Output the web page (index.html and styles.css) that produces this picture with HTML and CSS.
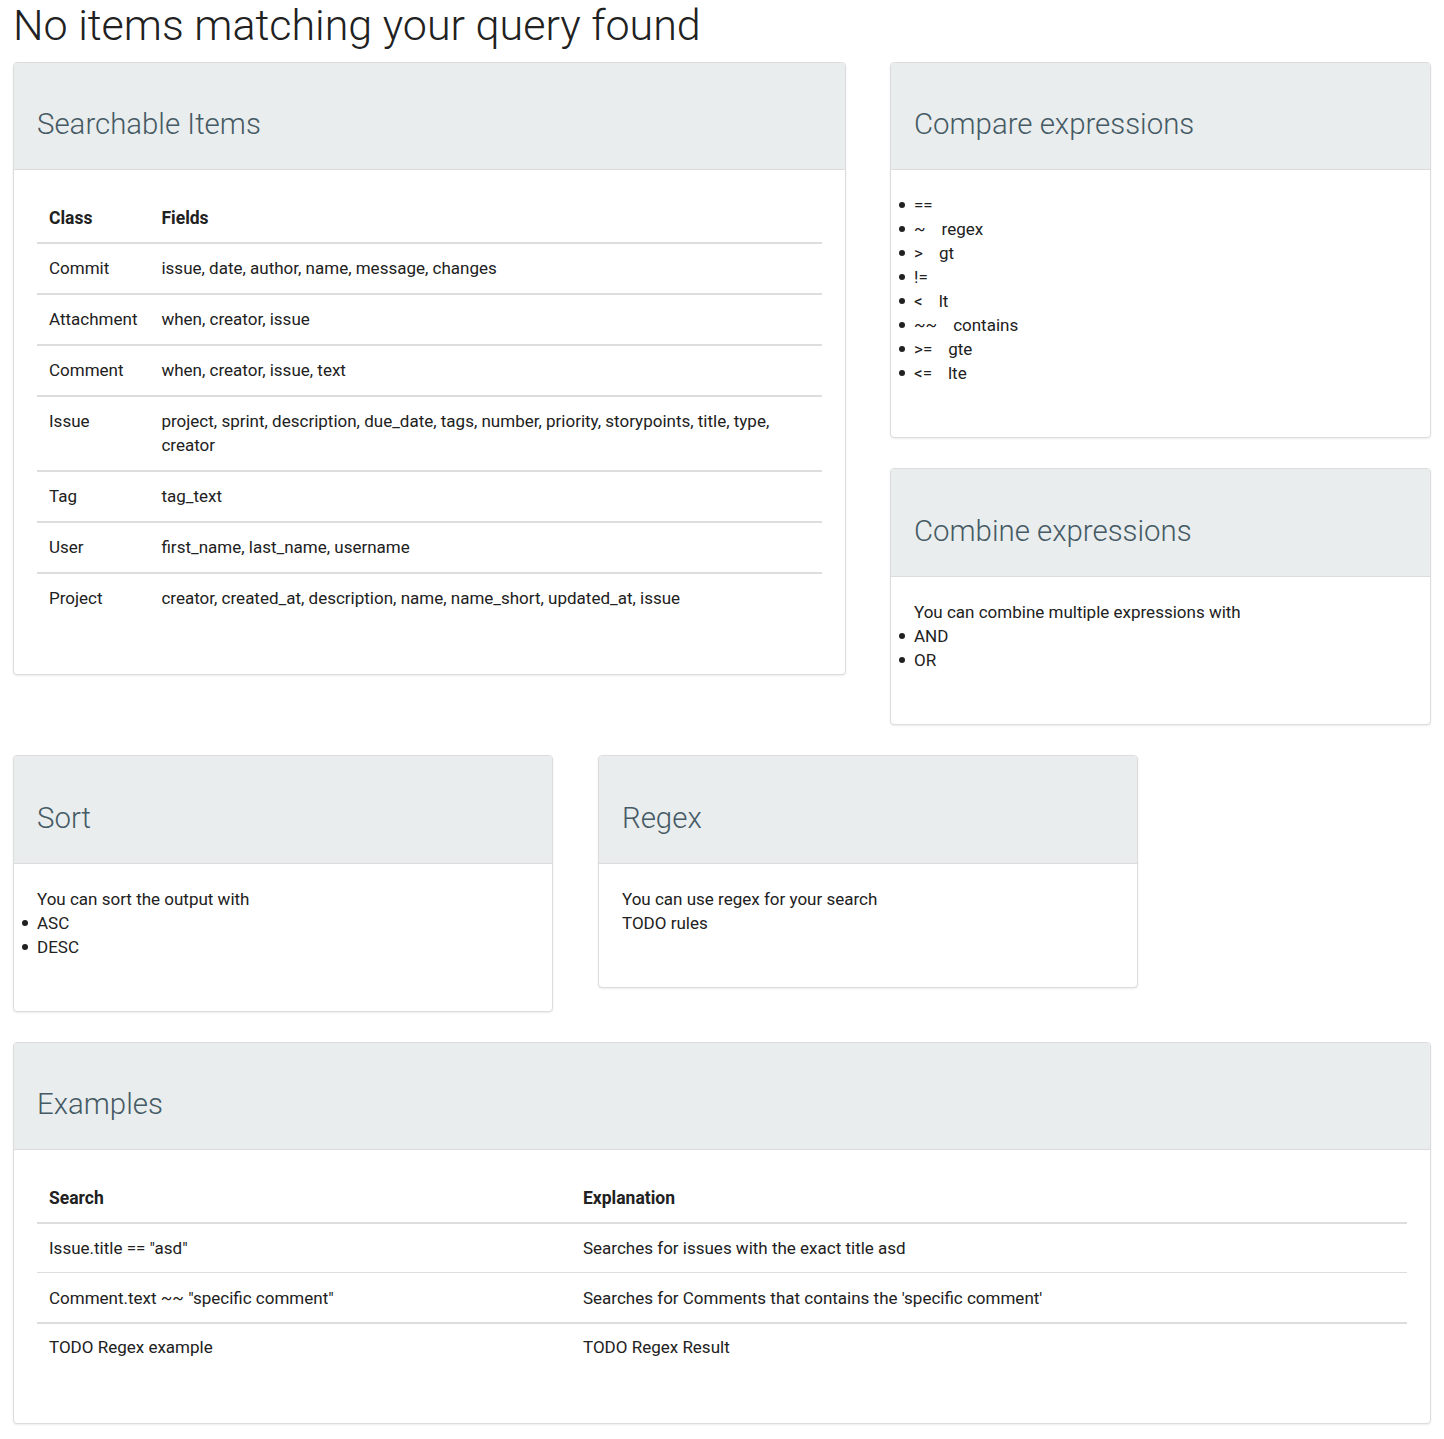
FILE: index.html
```html
<!DOCTYPE html>
<html lang="en">
<head>
<meta charset="utf-8">
<title>Search help</title>
<link rel="stylesheet" href="styles.css">
</head>
<body>
<div class="page">
  <h1 class="page-title">No items matching your query found</h1>

  <div class="row-top">
    <section class="card">
      <header class="card-header"><h3>Searchable Items</h3></header>
      <div class="card-body">
        <table class="table table-thick">
          <thead>
            <tr><th>Class</th><th>Fields</th></tr>
          </thead>
          <tbody>
            <tr><td>Commit</td><td>issue, date, author, name, message, changes</td></tr>
            <tr><td>Attachment</td><td>when, creator, issue</td></tr>
            <tr><td>Comment</td><td>when, creator, issue, text</td></tr>
            <tr><td>Issue</td><td>project, sprint, description, due_date, tags, number, priority, storypoints, title, type, creator</td></tr>
            <tr><td>Tag</td><td>tag_text</td></tr>
            <tr><td>User</td><td>first_name, last_name, username</td></tr>
            <tr><td>Project</td><td>creator, created_at, description, name, name_short, updated_at, issue</td></tr>
          </tbody>
        </table>
      </div>
    </section>

    <div class="col-stack">
      <section class="card">
        <header class="card-header"><h3>Compare expressions</h3></header>
        <div class="card-body card-body-text">
          <ul class="list">
            <li><span class="op">==</span></li>
            <li><span class="op">~</span>regex</li>
            <li><span class="op">&gt;</span>gt</li>
            <li><span class="op">!=</span></li>
            <li><span class="op">&lt;</span>lt</li>
            <li><span class="op">~~</span>contains</li>
            <li><span class="op">&gt;=</span>gte</li>
            <li><span class="op">&lt;=</span>lte</li>
          </ul>
        </div>
      </section>

      <section class="card">
        <header class="card-header card-header-tall"><h3>Combine expressions</h3></header>
        <div class="card-body card-body-text">
          <div>You can combine multiple expressions with</div>
          <ul class="list">
            <li>AND</li>
            <li>OR</li>
          </ul>
        </div>
      </section>
    </div>
  </div>

  <div class="row-mid">
    <section class="card card-small">
      <header class="card-header card-header-tall"><h3>Sort</h3></header>
      <div class="card-body card-body-text">
        <div>You can sort the output with</div>
        <ul class="list">
          <li>ASC</li>
          <li>DESC</li>
        </ul>
      </div>
    </section>

    <section class="card card-small">
      <header class="card-header card-header-tall"><h3>Regex</h3></header>
      <div class="card-body card-body-text">
        <div>You can use regex for your search</div>
        <div>TODO rules</div>
      </div>
    </section>
  </div>

  <section class="card card-wide">
    <header class="card-header"><h3>Examples</h3></header>
    <div class="card-body">
      <table class="table table-examples">
        <thead>
          <tr><th class="col-search">Search</th><th>Explanation</th></tr>
        </thead>
        <tbody>
          <tr><td>Issue.title == "asd"</td><td>Searches for issues with the exact title asd</td></tr>
          <tr class="thin"><td>Comment.text ~~ "specific comment"</td><td>Searches for Comments that contains the 'specific comment'</td></tr>
          <tr class="last"><td>TODO Regex example</td><td>TODO Regex Result</td></tr>
        </tbody>
      </table>
    </div>
  </section>
</div>
</body>
</html>
```

FILE: styles.css
```css
* { box-sizing: border-box; }

html, body {
  margin: 0;
  padding: 0;
  background: #ffffff;
}

body {
  font-family: Roboto, "Liberation Sans", Arial, sans-serif;
  font-size: 17px;
  line-height: 24px;
  color: #212121;
}

.page {
  padding: 0 13px 16px;
}

.page-title {
  font-family: Roboto, "Liberation Sans", Arial, sans-serif;
  font-weight: 300;
  font-size: 43px;
  line-height: 48px;
  color: #212121;
  margin: 1px 0 13px;
}

.row-top {
  display: grid;
  grid-template-columns: 833px 1fr;
  column-gap: 44px;
  align-items: start;
}

.col-stack {
  display: flex;
  flex-direction: column;
  gap: 30px;
}

.row-mid {
  display: flex;
  gap: 45px;
  align-items: flex-start;
  margin-top: 30px;
}

.card-small {
  width: 540px;
}

.card-wide {
  margin-top: 30px;
}

.card {
  background: #ffffff;
  border: 1px solid #dcdcdc;
  border-radius: 4px;
  box-shadow: 0 1px 2px rgba(0, 0, 0, 0.08);
  overflow: hidden;
}

.card-header {
  background: #e9edee;
  border-bottom: 1px solid #dcdcdc;
  padding: 45px 23px 28px;
}

.card-header-tall {
  padding-top: 46px;
}

.card-header h3 {
  margin: 0;
  font-family: Roboto, "Liberation Sans", Arial, sans-serif;
  font-weight: 300;
  font-size: 29.4px;
  line-height: 33px;
  color: #455a64;
}

.card-body {
  padding: 24px 23px 51px;
}

.card-body-text {
  padding-top: 23px;
  padding-bottom: 52px;
}

.list {
  margin: 0;
  padding: 0;
  list-style: none;
}

.list li {
  position: relative;
}

.list li::before {
  content: "";
  position: absolute;
  left: -15px;
  top: 9px;
  width: 6px;
  height: 6px;
  border-radius: 50%;
  background: #212121;
}

.op {
  display: inline-block;
  margin-right: 16px;
}

.table {
  width: 100%;
  border-collapse: collapse;
}

.table th {
  text-align: left;
  font-weight: 700;
  font-size: 17.5px;
  padding: 12px 12px;
  vertical-align: top;
}

.table td {
  padding: 12px 12px;
  vertical-align: top;
}

.table thead th {
  border-bottom: 2px solid #dddddd;
}

.table-thick tbody td {
  padding-bottom: 13px;
}

.table-thick tbody tr + tr td {
  border-top: 2px solid #dddddd;
}

.table-examples .col-search {
  width: 534px;
}

.table-examples tbody tr + tr td {
  border-top: 2px solid #dddddd;
}

.table-examples tbody tr.thin td {
  border-top-width: 1px;
  padding-top: 13px;
  padding-bottom: 12px;
}

.table-examples tbody tr.last td {
  padding-top: 11px;
  padding-bottom: 13px;
}
```
